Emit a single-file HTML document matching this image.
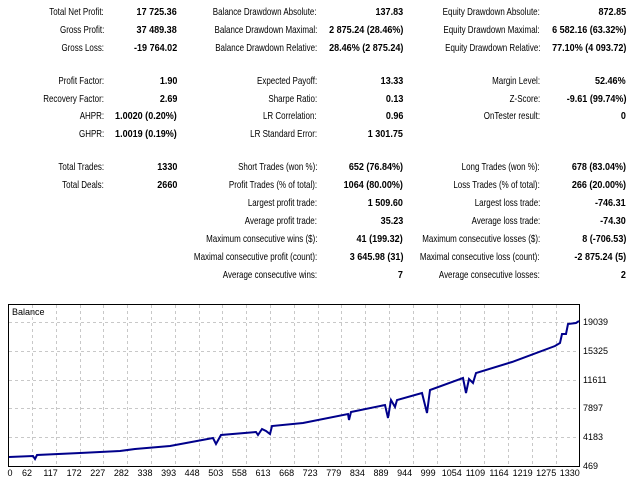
<!DOCTYPE html>
<html><head><meta charset="utf-8"><style>
body{margin:0;width:640px;height:480px;background:#fff;overflow:hidden;font-family:"Liberation Sans",sans-serif;font-size:10.5px;color:#000;position:relative}
.t{position:absolute;line-height:14px;white-space:nowrap;transform:scaleX(0.76);transform-origin:right center;text-align:right}
.b{font-weight:bold;transform:scaleX(0.86)}
</style></head><body>
<div id="c"></div>
<svg width="640" height="480" style="position:absolute;left:0;top:0" font-family="Liberation Sans, sans-serif" font-size="9">
<rect x="8.5" y="304.5" width="571" height="162" fill="#fff" stroke="#000"/>
<g stroke="#c8c8c8" stroke-dasharray="3,3" stroke-width="1">
<line x1="9" x2="579" y1="322.5" y2="322.5"/><line x1="9" x2="579" y1="351.5" y2="351.5"/><line x1="9" x2="579" y1="380.5" y2="380.5"/><line x1="9" x2="579" y1="408.5" y2="408.5"/><line x1="9" x2="579" y1="437.5" y2="437.5"/>
<g id="vg"></g>
</g>
<text x="12" y="315" font-size="9">Balance</text>
<polyline fill="none" stroke="#00008b" stroke-width="2" points="9,457 33,456 35,459 37,455 80,453 120,451 135,449 170,446 213,438 216,444 221,435 256,432 258,435 262,429 266,431 270,434 272,426 303,423 348,414 349,420 351,412 385,405 388,418 391,400 395,407 397,400 422,393 427,413 430,390 463,378 466,393 469,379 473,383 476,373 512,362 555,346 560,343 562,334 566,334 568,324 576,323 579,321"/>
<g id="yl" text-anchor="start">
<text x="583" y="325">19039</text><text x="583" y="354">15325</text><text x="583" y="383">11611</text><text x="583" y="411">7897</text><text x="583" y="440">4183</text><text x="583" y="469">469</text>
</g>
<g id="xl" text-anchor="middle"></g>
</svg>
<script>
var xs=[0,62,117,172,227,282,338,393,448,503,558,613,668,723,779,834,889,944,999,1054,1109,1164,1219,1275,1330];
var vg=document.getElementById('vg'),xl=document.getElementById('xl'),ns='http://www.w3.org/2000/svg';
for(var k=0;k<24;k++){var gx=Math.round(32+23.8*k);if(gx>=579)break;var l=document.createElementNS(ns,'line');l.setAttribute('x1',gx+.5);l.setAttribute('x2',gx+.5);l.setAttribute('y1',305);l.setAttribute('y2',466);vg.appendChild(l);}
xs.forEach(function(v,i){var x=i==0?10:27+23.6*(i-1);
var t=document.createElementNS(ns,'text');t.setAttribute('x',x);t.setAttribute('y',476);t.textContent=v;xl.appendChild(t);});
var rows=[
[12,"Total Net Profit:","17 725.36","Balance Drawdown Absolute:","137.83","Equity Drawdown Absolute:","872.85"],
[30,"Gross Profit:","37 489.38","Balance Drawdown Maximal:","2 875.24 (28.46%)","Equity Drawdown Maximal:","6 582.16 (63.32%)"],
[48,"Gross Loss:","-19 764.02","Balance Drawdown Relative:","28.46% (2 875.24)","Equity Drawdown Relative:","77.10% (4 093.72)"],
[81,"Profit Factor:","1.90","Expected Payoff:","13.33","Margin Level:","52.46%"],
[99,"Recovery Factor:","2.69","Sharpe Ratio:","0.13","Z-Score:","-9.61 (99.74%)"],
[116,"AHPR:","1.0020 (0.20%)","LR Correlation:","0.96","OnTester result:","0"],
[134,"GHPR:","1.0019 (0.19%)","LR Standard Error:","1 301.75","",""],
[167,"Total Trades:","1330","Short Trades (won %):","652 (76.84%)","Long Trades (won %):","678 (83.04%)"],
[185,"Total Deals:","2660","Profit Trades (% of total):","1064 (80.00%)","Loss Trades (% of total):","266 (20.00%)"],
[203,"","","Largest profit trade:","1 509.60","Largest loss trade:","-746.31"],
[221,"","","Average profit trade:","35.23","Average loss trade:","-74.30"],
[239,"","","Maximum consecutive wins ($):","41 (199.32)","Maximum consecutive losses ($):","8 (-706.53)"],
[257,"","","Maximal consecutive profit (count):","3 645.98 (31)","Maximal consecutive loss (count):","-2 875.24 (5)"],
[275,"","","Average consecutive wins:","7","Average consecutive losses:","2"]];
var R=[104,177,317,403,540,626],h='';
rows.forEach(function(r){for(var i=0;i<6;i++){if(!r[i+1])continue;
h+='<div class="t'+(i%2?' b':'')+'" style="right:'+(640-R[i])+'px;top:'+(r[0]-7)+'px">'+r[i+1]+'</div>';}});
document.getElementById('c').innerHTML=h;
</script>
</body></html>
